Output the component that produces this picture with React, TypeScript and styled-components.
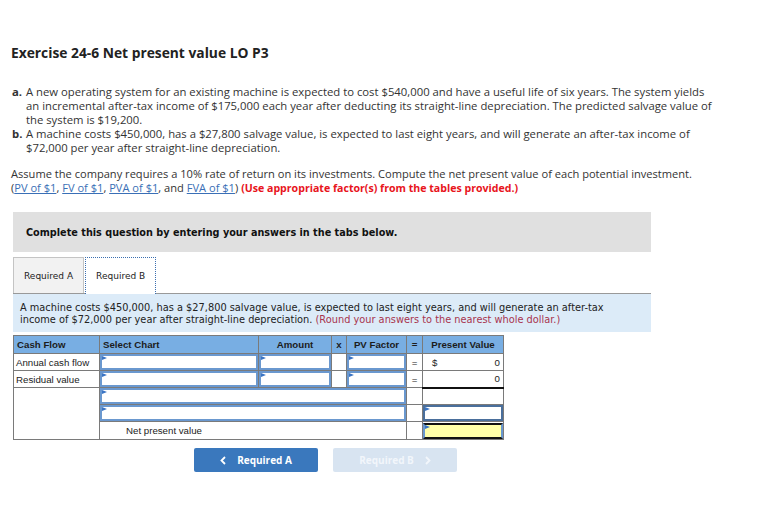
import React from "react";
import styled, { createGlobalStyle } from "styled-components";

const Global = createGlobalStyle`
  html, body { margin: 0; padding: 0; background: #fff; }
  body { font-family: "Open Sans", sans-serif; color: #222; }
`;

const Page = styled.div`
  width: 766px;
  height: 505px;
  box-sizing: border-box;
  padding: 45px 0 0 11px;
  overflow: hidden;
`;

const Title = styled.h1`
  margin: 0;
  font-family: "Open Sans", sans-serif;
  font-weight: 700;
  font-size: 13.8px;
  line-height: 16px;
  color: #222;
`;

const List = styled.ol`
  list-style: none;
  margin: 24px 0 0 1px;
  padding: 0;
`;

const Item = styled.li`
  display: grid;
  grid-template-columns: 14px max-content;
  font-size: 11.3px;
  line-height: 14px;
  color: #333;
  white-space: nowrap;
`;

const Marker = styled.b`
  font-weight: 700;
`;

const Para = styled.p`
  margin: 12px 0 0 0;
  font-size: 11.1px;
  line-height: 14px;
  color: #333;
  white-space: nowrap;
`;

const Link = styled.a`
  color: #3a6fb6;
  text-decoration: underline;
`;

const Red = styled.b`
  color: #e8141c;
  font-weight: 700;
  font-size: 10.6px;
`;

const Notice = styled.div`
  margin: 17px 0 0 2px;
  width: 638px;
  height: 40px;
  background: #e0e0e0;
  display: flex;
  align-items: center;
  padding-left: 13px;
  box-sizing: border-box;
  font-family: "DejaVu Sans", Verdana, sans-serif;
  font-weight: 700;
  font-size: 9.7px;
  color: #111;
`;

const Tabs = styled.div`
  margin: 5px 0 0 2px;
  width: 638px;
  display: flex;
  gap: 1px;
  border-bottom: 1px solid #999;
`;

const Tab = styled.div<{ $active?: boolean }>`
  height: ${(p) => (p.$active ? "37px" : "36px")};
  box-sizing: border-box;
  padding: 0 10px;
  display: flex;
  align-items: center;
  font-family: "DejaVu Sans", Verdana, sans-serif;
  font-size: 9px;
  color: #222;
  background: ${(p) => (p.$active ? "#fff" : "#f2f2f2")};
  border: ${(p) => (p.$active ? "1px dotted #3b6fb0" : "1px solid #c4c4c4")};
  border-bottom: none;
  margin-bottom: ${(p) => (p.$active ? "-1px" : "0")};
`;

const Info = styled.div`
  margin-left: 2px;
  width: 638px;
  box-sizing: border-box;
  background: #dcebf8;
  padding: 8px 7px 7px 7px;
  font-family: "DejaVu Sans", Verdana, sans-serif;
  font-size: 9.8px;
  line-height: 11.5px;
  color: #222;
  white-space: nowrap;
`;

const Round = styled.span`
  color: #a8344e;
`;

const Table = styled.table`
  margin: 3px 0 0 2px;
  border-collapse: collapse;
  table-layout: fixed;
  width: 490px;
  font-family: "Liberation Sans", Arial, sans-serif;
  font-size: 9.7px;
  color: #222;
`;

const Row = styled.tr<{ $h: number }>`
  height: ${(p) => p.$h}px;
`;

const Th = styled.th<{ $align?: string }>`
  background: #78aee3;
  border: 1px solid #7a7a7a;
  padding: 0 3px;
  font-weight: 700;
  text-align: ${(p) => p.$align || "center"};
  color: #1c1c1c;
`;

const Td = styled.td<{ $align?: string; $pad?: string; $thickTop?: boolean }>`
  border: 1px solid #7a7a7a;
  padding: ${(p) => p.$pad || "0"};
  text-align: ${(p) => p.$align || "left"};
  vertical-align: middle;
  ${(p) => (p.$thickTop ? "border-top: 2px solid #111;" : "")}
`;

const Field = styled.div<{ $yellow?: boolean; $dark?: boolean }>`
  position: relative;
  height: 16px;
  box-sizing: border-box;
  border: 2px solid ${(p) => (p.$dark ? "#4a6f9c" : "#6a98cf")};
  background: ${(p) => (p.$yellow ? "#ffffa8" : "#fff")};
  ${(p) => (p.$yellow ? "border-top-color:#111;border-bottom-color:#111;" : "")}
  &::before {
    content: "";
    position: absolute;
    left: 0;
    top: 0;
    border-left: 5px solid #3a74c4;
    border-top: 2px solid transparent;
    border-bottom: 2px solid transparent;
  }
`;

const Value = styled.div`
  display: flex;
  justify-content: space-between;
  padding: 0 3px 0 9px;
`;

const Buttons = styled.div`
  margin: 8px 0 0 183px;
  display: flex;
  gap: 15px;
`;

const Btn = styled.button<{ $disabled?: boolean }>`
  width: 124px;
  height: 24px;
  border: none;
  border-radius: 2px;
  background: ${(p) => (p.$disabled ? "#d8e4f1" : "#3a78bd")};
  color: ${(p) => (p.$disabled ? "#f2f6fb" : "#fff")};
  font-family: "Open Sans", sans-serif;
  font-weight: 700;
  font-size: 10px;
  display: flex;
  align-items: center;
  justify-content: center;
  gap: 11px;
  padding: 0;
`;

const Chevron = ({ dir }: { dir: "left" | "right" }) => (
  <svg width="6" height="9" viewBox="0 0 6 9">
    <path
      d={dir === "left" ? "M5 1 L1.5 4.5 L5 8" : "M1 1 L4.5 4.5 L1 8"}
      fill="none"
      stroke="currentColor"
      strokeWidth="1.8"
    />
  </svg>
);

export default function App() {
  return (
    <>
      <Global />
      <Page>
        <Title>Exercise 24-6 Net present value LO P3</Title>
        <List>
          <Item>
            <Marker>a.</Marker>
            <span>
              A new operating system for an existing machine is expected to cost $540,000 and have a useful life of six years. The system yields
              <br />
              an incremental after-tax income of $175,000 each year after deducting its straight-line depreciation. The predicted salvage value of
              <br />
              the system is $19,200.
            </span>
          </Item>
          <Item>
            <Marker>b.</Marker>
            <span>
              A machine costs $450,000, has a $27,800 salvage value, is expected to last eight years, and will generate an after-tax income of
              <br />
              $72,000 per year after straight-line depreciation.
            </span>
          </Item>
        </List>
        <Para>
          Assume the company requires a 10% rate of return on its investments. Compute the net present value of each potential investment.
          <br />
          (<Link>PV of $1</Link>, <Link>FV of $1</Link>, <Link>PVA of $1</Link>, and <Link>FVA of $1</Link>){" "}
          <Red>(Use appropriate factor(s) from the tables provided.)</Red>
        </Para>
        <Notice>Complete this question by entering your answers in the tabs below.</Notice>
        <Tabs>
          <Tab>Required A</Tab>
          <Tab $active>Required B</Tab>
        </Tabs>
        <Info>
          A machine costs $450,000, has a $27,800 salvage value, is expected to last eight years, and will generate an after-tax
          <br />
          income of $72,000 per year after straight-line depreciation. <Round>(Round your answers to the nearest whole dollar.)</Round>
        </Info>
        <Table>
          <colgroup>
            <col style={{ width: 86 }} />
            <col style={{ width: 159 }} />
            <col style={{ width: 73 }} />
            <col style={{ width: 15 }} />
            <col style={{ width: 60 }} />
            <col style={{ width: 16 }} />
            <col style={{ width: 81 }} />
          </colgroup>
          <thead>
            <Row $h={18}>
              <Th $align="left">Cash Flow</Th>
              <Th $align="left">Select Chart</Th>
              <Th>Amount</Th>
              <Th>x</Th>
              <Th>PV Factor</Th>
              <Th>=</Th>
              <Th>Present Value</Th>
            </Row>
          </thead>
          <tbody>
            <Row $h={17}>
              <Td $pad="0 2px">Annual cash flow</Td>
              <Td><Field /></Td>
              <Td><Field /></Td>
              <Td />
              <Td><Field /></Td>
              <Td $align="center">=</Td>
              <Td><Value><span>$</span><span>0</span></Value></Td>
            </Row>
            <Row $h={17}>
              <Td $pad="0 2px">Residual value</Td>
              <Td><Field /></Td>
              <Td><Field /></Td>
              <Td />
              <Td><Field /></Td>
              <Td $align="center">=</Td>
              <Td><Value><span /><span>0</span></Value></Td>
            </Row>
            <Row $h={17}>
              <Td rowSpan={3} />
              <Td colSpan={4}><Field /></Td>
              <Td />
              <Td $thickTop />
            </Row>
            <Row $h={17}>
              <Td colSpan={4}><Field /></Td>
              <Td />
              <Td><Field $dark /></Td>
            </Row>
            <Row $h={18}>
              <Td colSpan={4} $pad="0 0 0 26px">Net present value</Td>
              <Td />
              <Td><Field $yellow /></Td>
            </Row>
          </tbody>
        </Table>
        <Buttons>
          <Btn><Chevron dir="left" />Required A</Btn>
          <Btn $disabled>Required B<Chevron dir="right" /></Btn>
        </Buttons>
      </Page>
    </>
  );
}
